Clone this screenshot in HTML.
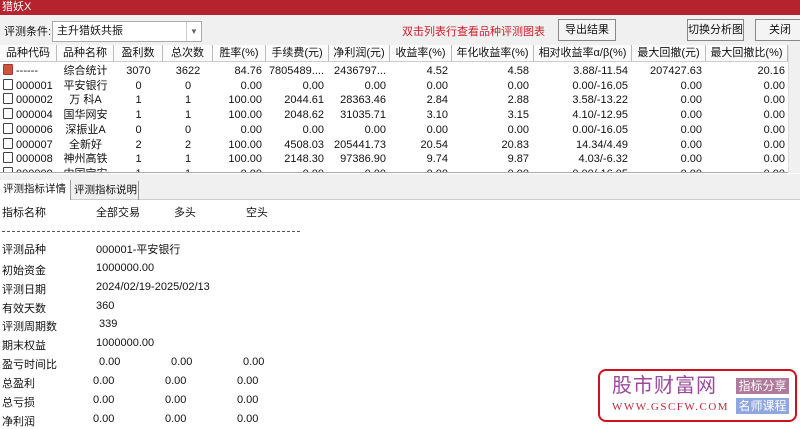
<!DOCTYPE html><html><head><meta charset="utf-8"><style>
*{margin:0;padding:0;box-sizing:border-box}
body{width:800px;height:425px;overflow:hidden;background:#fff;font-family:"Liberation Sans","Noto Sans CJK SC",sans-serif;font-size:11px;color:#111;position:relative}
.a{position:absolute;white-space:nowrap}
.btn{position:absolute;top:19px;height:22px;border:1px solid #888;background:#f4f4f4;text-align:center;line-height:20px;font-size:11px}
.hd{position:absolute;top:45px;height:17px;background:#fbfbfb;border-right:1px solid #bbb;border-bottom:1px solid #ccc;text-align:center;line-height:17px;font-size:11px}
.r{position:absolute;height:15px;line-height:15px;font-size:11px;text-align:right}
.ic{display:inline-block;width:10px;height:11px;border:1px solid #444;border-radius:1px;vertical-align:-1px;margin-right:3px}
.b{position:absolute;font-size:11px;white-space:nowrap}
</style></head><body>
<div class="a" style="left:0;top:0;width:800px;height:15px;background:#b5232f;color:#fff;font-size:11px;line-height:14px;padding-left:2px">猎妖X</div>
<div class="a" style="left:0;top:15px;width:800px;height:30px;background:#f0f0f0"></div>
<div class="a" style="left:4px;top:23px;">评测条件:</div>
<div class="a" style="left:52px;top:21px;width:150px;height:21px;background:#fff;border:1px solid #aaa;padding-left:4px;line-height:19px">主升猎妖共振</div>
<div class="a" style="left:186px;top:22px;width:15px;height:19px;border-left:1px solid #ccc;color:#666;font-size:8px;text-align:center;line-height:19px">▼</div>
<div class="a" style="left:402px;top:23px;color:#d0202a">双击列表行查看品种评测图表</div>
<div class="btn" style="left:558px;width:58px">导出结果</div>
<div class="btn" style="left:687px;width:57px">切换分析图</div>
<div class="btn" style="left:755px;width:50px">关闭</div>
<div class="a" style="left:0;top:45px;width:800px;height:128px;background:#fff;border-bottom:1px solid #aaa;overflow:hidden"></div>
<div class="hd" style="left:0;width:57px">品种代码</div>
<div class="hd" style="left:57px;width:57px">品种名称</div>
<div class="hd" style="left:114px;width:49px">盈利数</div>
<div class="hd" style="left:163px;width:50px">总次数</div>
<div class="hd" style="left:213px;width:53px">胜率(%)</div>
<div class="hd" style="left:266px;width:63px">手续费(元)</div>
<div class="hd" style="left:329px;width:61px">净利润(元)</div>
<div class="hd" style="left:390px;width:62px">收益率(%)</div>
<div class="hd" style="left:452px;width:82px">年化收益率(%)</div>
<div class="hd" style="left:534px;width:98px">相对收益率α/β(%)</div>
<div class="hd" style="left:632px;width:74px">最大回撤(元)</div>
<div class="hd" style="left:706px;width:82px">最大回撤比(%)</div>
<div class="a" style="left:788px;top:45px;width:12px;height:128px;background:#f0f0f0;border-left:1px solid #ddd"></div>
<div id="rows" class="a" style="left:0;top:0;width:788px;height:172px;overflow:hidden"></div>
<script>
var d=[["------","综合统计","3070","3622","84.76","7805489....","2436797...","4.52","4.58","3.88/-11.54","207427.63","20.16"],
["000001","平安银行","0","0","0.00","0.00","0.00","0.00","0.00","0.00/-16.05","0.00","0.00"],
["000002","万 科A","1","1","100.00","2044.61","28363.46","2.84","2.88","3.58/-13.22","0.00","0.00"],
["000004","国华网安","1","1","100.00","2048.62","31035.71","3.10","3.15","4.10/-12.95","0.00","0.00"],
["000006","深振业A","0","0","0.00","0.00","0.00","0.00","0.00","0.00/-16.05","0.00","0.00"],
["000007","全新好","2","2","100.00","4508.03","205441.73","20.54","20.83","14.34/4.49","0.00","0.00"],
["000008","神州高铁","1","1","100.00","2148.30","97386.90","9.74","9.87","4.03/-6.32","0.00","0.00"],
["000009","中国宝安","1","1","0.00","0.00","0.00","0.00","0.00","0.00/-16.05","0.00","0.00"]];
var h="";
for(var i=0;i<d.length;i++){var y=64+i*14.7,r=d[i];
h+='<div class="r" style="left:3px;top:'+y+'px;text-align:left"><span class="ic"'+(i==0?' style="background:#c9553f;border-color:#a33"':'')+'></span>'+r[0]+'</div>';
h+='<div class="r" style="left:57px;width:57px;top:'+y+'px;text-align:center">'+r[1]+'</div>';
h+='<div class="r" style="left:114px;width:49px;top:'+y+'px;text-align:center">'+r[2]+'</div>';
h+='<div class="r" style="left:163px;width:50px;top:'+y+'px;text-align:center">'+r[3]+'</div>';
var R=[[213,262],[266,324],[329,386],[390,448],[452,529],[534,628],[632,702],[706,785]];
for(var j=0;j<8;j++)h+='<div class="r" style="left:'+R[j][0]+'px;width:'+(R[j][1]-R[j][0])+'px;top:'+y+'px">'+r[j+4]+'</div>';}
document.getElementById("rows").innerHTML=h;
</script>
<div class="a" style="left:0;top:174px;width:800px;height:26px;background:#f0f0f0;border-bottom:1px solid #ccc"></div>
<div class="a" style="left:0;top:180px;width:71px;height:20px;background:#fff;border-right:1px solid #999;line-height:18px;padding-left:3px;font-size:10.5px">评测指标详情</div>
<div class="a" style="left:72px;top:181px;width:67px;height:19px;border-right:1px solid #999;line-height:18px;padding-left:2px;font-size:10.5px">评测指标说明</div>
<div class="b" style="left:2px;top:204px">指标名称</div><div class="b" style="left:96px;top:204px">全部交易</div><div class="b" style="left:174px;top:204px">多头</div><div class="b" style="left:246px;top:204px">空头</div>
<div class="a" style="left:2px;top:231px;width:298px;border-top:1px dashed #555"></div>
<div class="b" style="left:2px;top:241px">评测品种</div><div class="b" style="left:96px;top:241px">000001-平安银行</div>
<div class="b" style="left:2px;top:262px">初始资金</div><div class="b" style="left:96px;top:262px">1000000.00</div>
<div class="b" style="left:2px;top:281px">评测日期</div><div class="b" style="left:96px;top:281px">2024/02/19-2025/02/13</div>
<div class="b" style="left:2px;top:300px">有效天数</div><div class="b" style="left:96px;top:300px">360</div>
<div class="b" style="left:2px;top:318px">评测周期数</div><div class="b" style="left:99px;top:318px">339</div>
<div class="b" style="left:2px;top:337px">期末权益</div><div class="b" style="left:96px;top:337px">1000000.00</div>
<div class="b" style="left:2px;top:356px">盈亏时间比</div><div class="b" style="left:99px;top:356px">0.00</div><div class="b" style="left:171px;top:356px">0.00</div><div class="b" style="left:243px;top:356px">0.00</div>
<div class="b" style="left:2px;top:375px">总盈利</div><div class="b" style="left:93px;top:375px">0.00</div><div class="b" style="left:165px;top:375px">0.00</div><div class="b" style="left:237px;top:375px">0.00</div>
<div class="b" style="left:2px;top:394px">总亏损</div><div class="b" style="left:93px;top:394px">0.00</div><div class="b" style="left:165px;top:394px">0.00</div><div class="b" style="left:237px;top:394px">0.00</div>
<div class="b" style="left:2px;top:413px">净利润</div><div class="b" style="left:93px;top:413px">0.00</div><div class="b" style="left:165px;top:413px">0.00</div><div class="b" style="left:237px;top:413px">0.00</div>
<div class="a" style="left:598px;top:369px;width:199px;height:53px;border:2px solid #d0101c;border-radius:8px;background:#fff"></div>
<div class="a" style="left:612px;top:374px;font-size:20px;color:#9a4a9a;letter-spacing:1px;line-height:24px">股市财富网</div>
<div class="a" style="left:612px;top:401px;font-family:'Liberation Serif',serif;font-size:11px;color:#c02838;letter-spacing:1.5px">WWW.GSCFW.COM</div>
<div class="a" style="left:736px;top:378px;width:53px;height:16px;background:#b07a9a;color:#fff;font-size:12px;line-height:16px;text-align:center">指标分享</div>
<div class="a" style="left:736px;top:398px;width:53px;height:16px;background:#8fa6e0;color:#fff;font-size:12px;line-height:16px;text-align:center">名师课程</div>
</body></html>
